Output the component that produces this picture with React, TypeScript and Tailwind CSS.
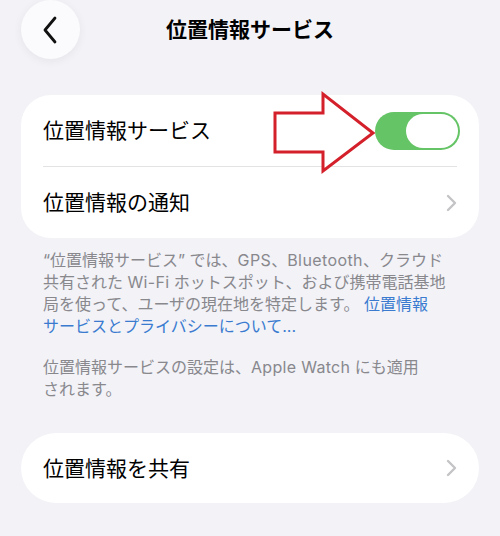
import React from "react";

const font = { fontFamily: 'Inter, "Noto Sans CJK JP", sans-serif' };

function ChevronRight() {
  return (
    <svg width="12" height="18" viewBox="0 0 12 18" fill="none">
      <path d="M3 2l7 7-7 7" stroke="#c4c4c7" strokeWidth="2.4" strokeLinecap="round" strokeLinejoin="round" />
    </svg>
  );
}

export default function App() {
  return (
    <div className="relative w-[500px] h-[536px] overflow-hidden bg-[#f2f2f7] text-black" style={font}>
      {/* header */}
      <div className="grid grid-cols-[1fr_auto_1fr] items-center h-[59px]">
        <div className="pl-[21px]">
          <div className="w-[59px] h-[59px] rounded-full bg-[#fbfbfd] shadow-[0_2px_10px_rgba(0,0,0,0.06)] flex items-center justify-center">
            <svg width="20" height="30" viewBox="0 0 20 30" fill="none">
              <path d="M14 3L4 15l10 12" stroke="#111" strokeWidth="2.8" strokeLinecap="round" strokeLinejoin="round" />
            </svg>
          </div>
        </div>
        <div className="text-[21px] font-bold leading-none">位置情報サービス</div>
        <div />
      </div>

      {/* card 1 */}
      <div className="mx-[21px] mt-[36px] bg-white rounded-[30px]">
        <div className="flex items-center justify-between h-[71px] pl-[22px] pr-[19px]">
          <span className="text-[21px] leading-none">位置情報サービス</span>
          <div className="w-[85px] h-[38px] rounded-full bg-[#65c466] flex items-center justify-end p-[2px]">
            <div className="w-[52px] h-[34px] rounded-full bg-white" />
          </div>
        </div>
        <div className="ml-[22px] mr-[22px] h-px bg-[#e3e3e6]" />
        <div className="flex items-center justify-between h-[71px] pl-[22px] pr-[22px]">
          <span className="text-[21px] leading-none">位置情報の通知</span>
          <ChevronRight />
        </div>
      </div>

      {/* footer */}
      <div className="px-[43px] mt-[11px] text-[16px] leading-[22px] text-[#88888d] whitespace-nowrap">
        <p>
          “位置情報サービス” では、<span className="tracking-[0.4px]">GPS</span>、<span className="tracking-[0.4px]">Bluetooth</span>、クラウド
          <br />
          共有された <span className="tracking-[0.3px]">Wi-Fi</span> ホットスポット、および携帯電話基地
          <br />
          局を使って、ユーザの現在地を特定します。 <span className="text-[#3a7bd0]">位置情報</span>
          <br />
          <span className="text-[#3a7bd0]">サービスとプライバシーについて...</span>
        </p>
        <p className="mt-[19px]">
          位置情報サービスの設定は、<span className="tracking-[0.3px]">Apple Watch</span> にも適用
          <br />
          されます。
        </p>
      </div>

      {/* card 2 */}
      <div className="mx-[21px] mt-[33px] bg-white rounded-[35px] flex items-center justify-between h-[70px] pl-[22px] pr-[22px]">
        <span className="text-[21px] leading-none">位置情報を共有</span>
        <ChevronRight />
      </div>

      {/* red arrow overlay */}
      <svg className="absolute left-0 top-0 pointer-events-none" width="500" height="536" viewBox="0 0 500 536">
        <polygon
          points="275,113 323,113 323,94 373,133 323,171 323,152 275,152"
          fill="white"
          stroke="#d4202a"
          strokeWidth="3"
          strokeLinejoin="miter"
        />
      </svg>
    </div>
  );
}
